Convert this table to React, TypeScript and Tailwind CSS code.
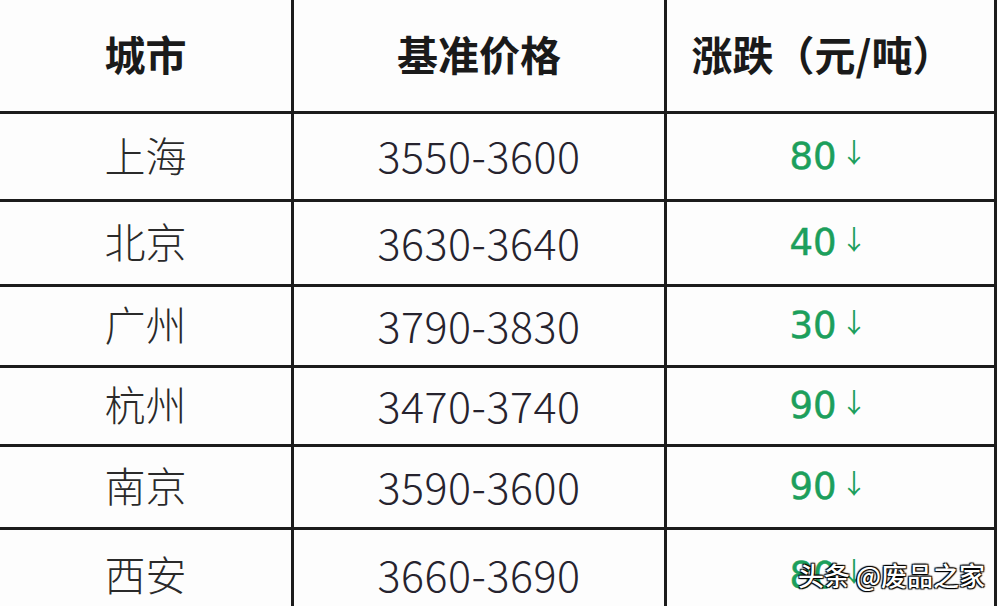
const ROWS = [
  { city: '上海', price: '3550-3600', change: '80', h: 'h-[88px]' },
  { city: '北京', price: '3630-3640', change: '40', h: 'h-[85px]' },
  { city: '广州', price: '3790-3830', change: '30', h: 'h-[81px]' },
  { city: '杭州', price: '3470-3740', change: '90', h: 'h-[79px]' },
  { city: '南京', price: '3590-3600', change: '90', h: 'h-[83px]' },
  { city: '西安', price: '3660-3690', change: '80', h: 'h-[94px]' },
];

const cjk = "font-['Noto_Sans_CJK_SC',sans-serif]";

export default function App() {
  return (
    <div className={`relative h-[606px] w-[998px] overflow-hidden bg-[#fdfdfd] ${cjk}`}>
      <div className="w-[997px] border-r-[3px] border-[#1c1c1c]">
        {/* header */}
        <div className="flex h-[114px] border-b-[3px] border-[#1c1c1c] text-[41px] font-bold text-[#1a1a1a]">
          <div className="flex w-[294px] items-center justify-center border-r-[3px] border-[#1c1c1c] pb-1">城市</div>
          <div className="flex w-[373px] items-center justify-center border-r-[3px] border-[#1c1c1c] pb-1">基准价格</div>
          <div className="flex flex-1 items-center justify-center pb-1 pr-4">涨跌（元/吨）</div>
        </div>

        {ROWS.map((row) => (
          <div key={row.city} className={`flex ${row.h} border-b-[3px] border-[#1c1c1c]`}>
            <div className="flex w-[294px] items-center justify-center border-r-[3px] border-[#1c1c1c] pb-1 text-[41px] font-light text-[#2a2a2a]">
              {row.city}
            </div>
            <div className="flex w-[373px] items-center justify-center border-r-[3px] border-[#1c1c1c] pb-1 text-[43px] font-light tracking-[0.5px] text-[#26232e]">
              {row.price}
            </div>
            <div className="flex flex-1 items-center justify-center pr-1 font-['DejaVu_Sans',sans-serif] text-[37px] text-[#1c9f5c] [-webkit-text-stroke:0.5px_#1c9f5c]">
              {row.change}
              <span className={`ml-1 mb-2 ${cjk} text-[27px] font-normal [-webkit-text-stroke:0px]`}>↓</span>
            </div>
          </div>
        ))}
      </div>

      {/* watermark */}
      <div className="absolute bottom-[12px] right-[13px] text-[26px] font-medium text-white [text-shadow:1px_1px_1px_#000,-1px_-1px_1px_#000,1px_-1px_1px_#000,-1px_1px_1px_#000]">
        头条 @废品之家
      </div>
    </div>
  );
}
